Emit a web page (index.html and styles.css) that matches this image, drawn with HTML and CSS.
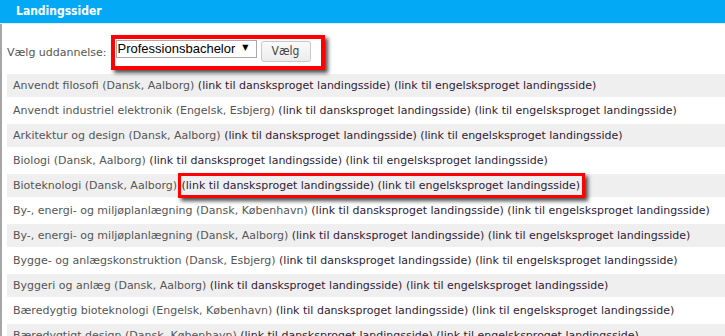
FILE: index.html
```html
<!DOCTYPE html>
<html lang="da">
<head>
    <meta charset="UTF-8">
    <title>Landingssider</title>
    <link rel="stylesheet" href="styles.css">
</head>
<body>
    <div class="panel">
        <div class="panel-head">Landingssider</div>
        <div class="panel-body">
            <form class="chooser">
                <label for="type">Vælg uddannelse:</label>
                <div class="mark">
                    <span class="select-wrap">
                        <select id="type">
                            <option>Professionsbachelor</option>
                        </select>
                    </span>
                    <button type="button">Vælg</button>
                </div>
            </form>

            <table class="list">
                <tr><td>Anvendt filosofi (Dansk, Aalborg) <a href="#">(link til dansksproget landingsside)</a> <a href="#">(link til engelsksproget landingsside)</a></td></tr>
                <tr><td>Anvendt industriel elektronik (Engelsk, Esbjerg) <a href="#">(link til dansksproget landingsside)</a> <a href="#">(link til engelsksproget landingsside)</a></td></tr>
                <tr><td>Arkitektur og design (Dansk, Aalborg) <a href="#">(link til dansksproget landingsside)</a> <a href="#">(link til engelsksproget landingsside)</a></td></tr>
                <tr><td>Biologi (Dansk, Aalborg) <a href="#">(link til dansksproget landingsside)</a> <a href="#">(link til engelsksproget landingsside)</a></td></tr>
                <tr><td>Bioteknologi (Dansk, Aalborg) <span class="mark"><a href="#">(link til dansksproget landingsside)</a> <a href="#">(link til engelsksproget landingsside)</a></span></td></tr>
                <tr><td>By-, energi- og miljøplanlægning (Dansk, København) <a href="#">(link til dansksproget landingsside)</a> <a href="#">(link til engelsksproget landingsside)</a></td></tr>
                <tr><td>By-, energi- og miljøplanlægning (Dansk, Aalborg) <a href="#">(link til dansksproget landingsside)</a> <a href="#">(link til engelsksproget landingsside)</a></td></tr>
                <tr><td>Bygge- og anlægskonstruktion (Dansk, Esbjerg) <a href="#">(link til dansksproget landingsside)</a> <a href="#">(link til engelsksproget landingsside)</a></td></tr>
                <tr><td>Byggeri og anlæg (Dansk, Aalborg) <a href="#">(link til dansksproget landingsside)</a> <a href="#">(link til engelsksproget landingsside)</a></td></tr>
                <tr><td>Bæredygtig bioteknologi (Engelsk, København) <a href="#">(link til dansksproget landingsside)</a> <a href="#">(link til engelsksproget landingsside)</a></td></tr>
                <tr><td>Bæredygtigt design (Dansk, København) <a href="#">(link til dansksproget landingsside)</a> <a href="#">(link til engelsksproget landingsside)</a></td></tr>
            </table>
        </div>
    </div>
</body>
</html>
```

FILE: styles.css
```css
* { margin: 0; padding: 0; box-sizing: border-box; }
body { font-family: "DejaVu Sans", sans-serif; font-size: 11px; color: #555; background: #fff; overflow: hidden; }
.panel { width: 760px; }
.panel-head { height: 24px; background-color: #03a9f4; border-bottom: 1px solid #d8f0fb; color: #fff; font-family: "DejaVu Sans Condensed", sans-serif; font-weight: bold; font-size: 12px; line-height: 23px; padding-left: 16px; }
.panel-body { border-left: 2px solid #a6a6a6; padding: 11px 0 0 5px; }
.chooser { display: flex; align-items: center; height: 34px; margin-bottom: 5px; }
.chooser label { font-size: 11px; color: #555; margin-right: 4px; }
.chooser .mark { display: flex; align-items: flex-start; gap: 4px; padding: 1px 10px 4px 1px; border-width: 4px; }
.select-wrap { position: relative; display: block; }
.select-wrap::after { content: "▼"; position: absolute; right: 8px; top: 3px; font-size: 8px; color: #000; pointer-events: none; }
.chooser select { display: block; font-family: "Liberation Sans", Arial, sans-serif; font-size: 13px; color: #000; height: 18px; width: 141px; border: 1px solid #a9a9a9; background: #fff; -webkit-appearance: none; appearance: none; padding-left: 1px; line-height: 16px; }
.chooser button { font-family: "DejaVu Sans Condensed", sans-serif; font-size: 12px; color: #444; width: 50px; height: 21px; margin-top: 1px; border: 1px solid #c8c8c8; border-radius: 3px; background: linear-gradient(#fafafa, #ececec); }
.mark { border: 3px solid #f00; box-shadow: 3px 3px 4px rgba(0, 0, 0, 0.7); }
.list { border-collapse: separate; border-spacing: 0 2px; width: 100%; margin-top: -2px; }
.list td { height: 23px; padding: 0 6px; white-space: nowrap; }
.list tr:nth-child(odd) td { background-color: #efefef; }
.list a { color: #2f1b36; text-decoration: none; }
.list .mark { padding: 3px 2px 3px 1px; margin-left: -3px; }
```
